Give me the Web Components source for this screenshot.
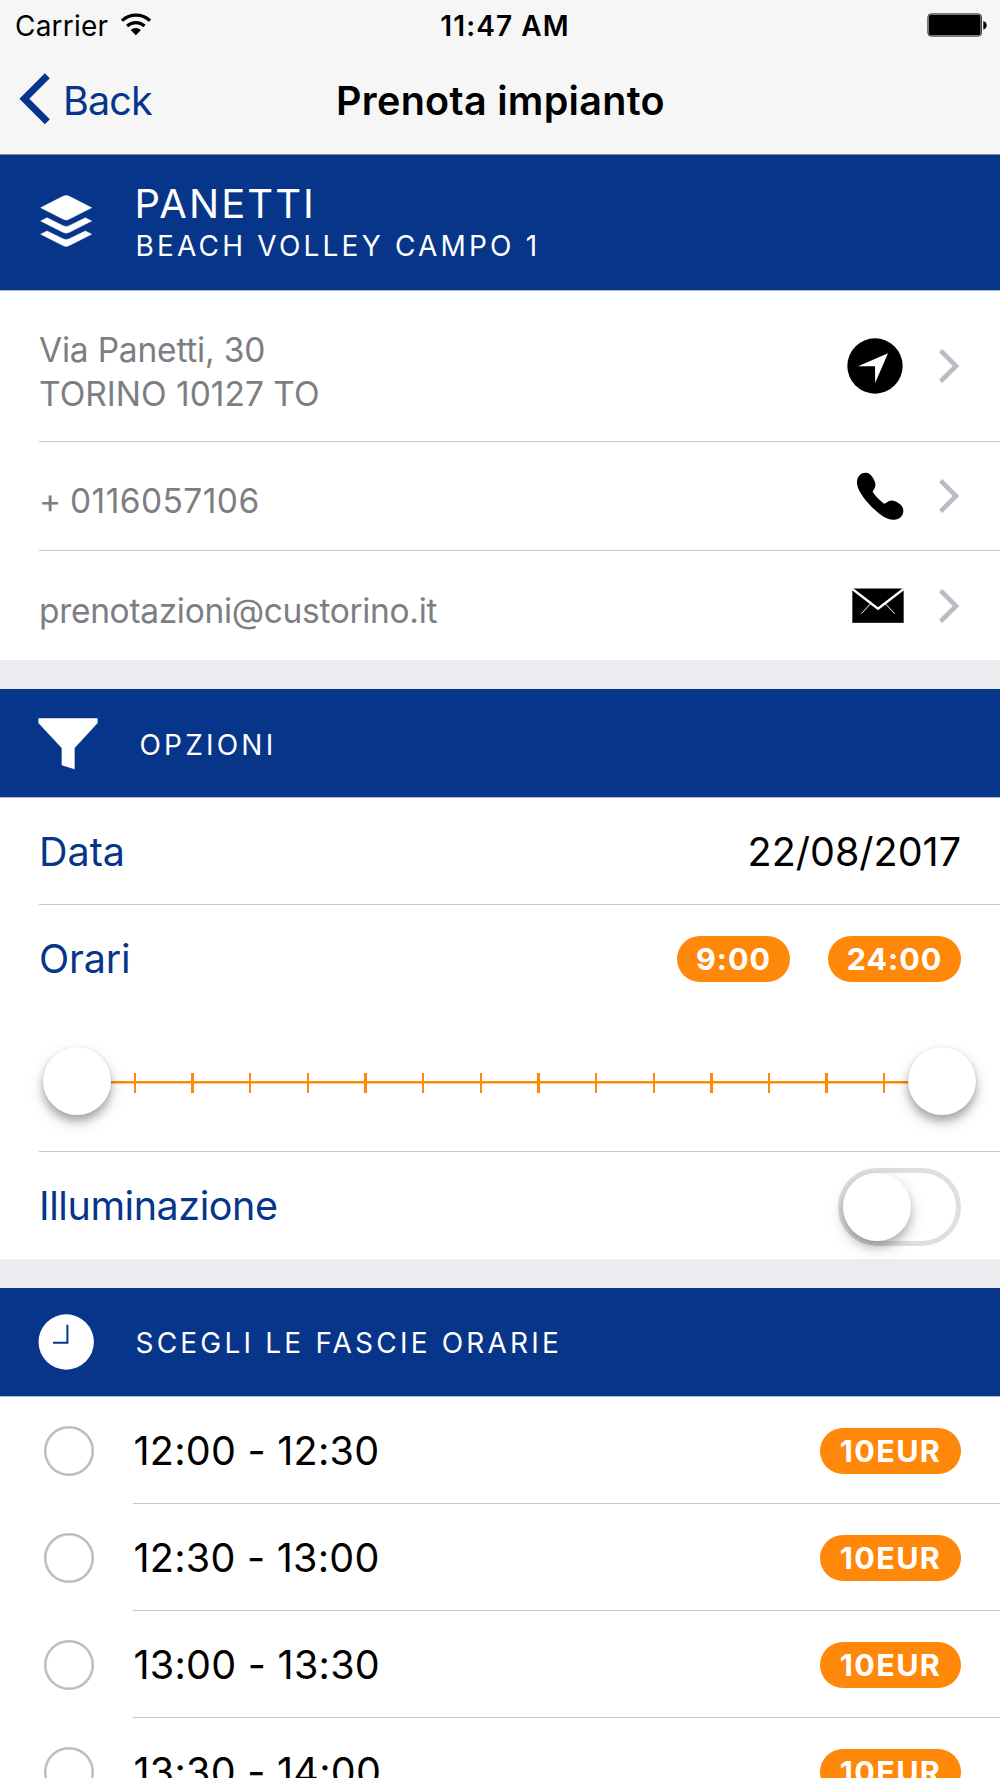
<!DOCTYPE html>
<html lang="it">
<head>
<meta charset="utf-8">
<title>Prenota impianto</title>
<style>
    body {
        margin: 0;
        background: #ebebf0;
        font-family: Inter, "Liberation Sans", sans-serif;
        --blue: #073589;
        --orange: #ff8709;
        --line: #c8c7cc;
    }
</style>
</head>
<body>
<booking-page></booking-page>

<script>
(function(){
    function define(name, html, setup) {
        const template = document.createElement('template');
        template.innerHTML = html;

        window.customElements.define(name, class extends HTMLElement {
            constructor() {
                super();
                const shadowRoot = this.attachShadow({mode: 'open'});
                shadowRoot.appendChild(template.content.cloneNode(true));
            }

            connectedCallback() {
                if (setup) setup(this, this.shadowRoot);
            }
        });
    }

    // name: [width, height, viewBox, markup]
    const icons = {
        wifi: [30, 23, '362 37 91 69', `
            <g fill="none" stroke="#000" stroke-width="9.5">
                <path d="M365 60 A62 62 0 0 1 450 60"/>
                <path d="M380.500 76 A39 39 0 0 1 433.500 76"/>
            </g>
            <path d="M391.500 88.500 A22 22 0 0 1 422.500 88.500 L407 104 Z"/>`],
        battery: [60, 24, '1280 38 180 72', `
            <rect x="1282.500" y="40.500" width="161" height="67" rx="10" fill="#999" stroke="#444" stroke-width="3"/>
            <rect x="1286" y="44" width="154" height="60" rx="5"/>
            <path d="M1449 62 Q1459 65 1459 75 Q1459 85 1449 88 Z"/>`],
        back: [32, 52, '58 219 96 156', `
            <path d="M143 227.500 L74 296.500 L143 365.500" fill="none" stroke="#073589" stroke-width="21"/>`],
        layers: [52, 52, '121 585 156 156', `
            <g fill="#fff" stroke="#fff" stroke-width="1.5">
                <path d="M123 623 L190 589 Q199.500 584 209 589 L276 623 L209 657 Q199.500 663 190 657 Z"/>
                <path d="M123 663 L142 653.500 L190 677 Q199.500 682 209 677 L257 653.500 L276 663 L209 697 Q199.500 702 190 697 Z"/>
                <path d="M123 702.500 L142 693 L190 716.500 Q199.500 721.500 209 716.500 L257 693 L276 702.500 L209 736.500 Q199.500 742 190 736.500 Z"/>
            </g>`],
        funnel: [60, 52, '115 143 180 156', `
            <path d="M116 144 H294 V158 L225 233 V297 L186 285 V233 L116 158 Z" fill="#fff"/>`],
        clock: [56, 56, '0 0 56 56', `
            <circle cx="28.2" cy="28" r="27.700" fill="#fff"/>
            <path d="M29.400 10.800 V28.800 H15" fill="none" stroke="#073589" stroke-width="2"/>`],
        locate: [56, 56, '442 114 168 168', `
            <circle cx="526" cy="198" r="83"/>
            <path d="M565 160 L475 198.500 L526 199 L526.500 249 Z" fill="#fff"/>`],
        phone: [48, 48, '467 517 144 144', `
            <path d="M470 547 C470 530 482 518 496 519 C506 519 512 525 518 535 C524 545 526 552 525 559
                C524 566 519 570 517 577 C526 590 538 602 551 612 C558 611 562 604 570 603 C578 602 588 606 597 612
                C605 618 609 624 609 634 C608 650 598 659 581 660 C565 661 548 651 534 640 C518 626 500 608 488 591
                C478 576 470 563 470 547Z"/>`],
        mail: [52, 35, '456 865 156 105', `
            <rect x="457" y="866.500" width="154" height="103"/>
            <g fill="none" stroke="#fff">
                <path d="M456 867 L534 927 L612 867" stroke-width="7"/>
                <path d="M512 912 L484 942 M556 912 L584 942" stroke-width="3"/>
            </g>`],
        chevron: [20, 34, '718 146 60 102', `
            <path d="M723 151 L769 197 L723 243" fill="none" stroke="#bcbbc3" stroke-width="14"/>`]
    };

    define('ui-icon', `
        <style>
            :host {
                display: block;
                flex: none;
            }
            svg {
                display: block;
            }
        </style>
    `, (host, root) => {
        const [width, height, box, markup] = icons[host.getAttribute('name')];
        root.innerHTML += `<svg width="${width}" height="${height}" viewBox="${box}">${markup}</svg>`;
    });

    define('status-bar', `
        <style>
            :host {
                display: grid;
                grid-template-columns: 1fr auto 1fr;
                align-items: center;
                height: 48px;
                padding: 0 13px 0 15px;
                font-size: 28px;
                line-height: 34px;
            }
            .carrier {
                display: flex;
                align-items: center;
                gap: 13px;
                letter-spacing: 0.2px;
            }
            .carrier span {
                padding-top: 3px;
            }
            .time {
                font-weight: 600;
                letter-spacing: 1.1px;
                padding: 3px 0 0 8px;
            }
            .battery {
                justify-self: end;
                padding-top: 1px;
            }
        </style>
        <div class="carrier"><span>Carrier</span><ui-icon name="wifi"></ui-icon></div>
        <div class="time">11:47 AM</div>
        <ui-icon class="battery" name="battery"></ui-icon>
    `);

    define('nav-bar', `
        <style>
            :host {
                display: grid;
                grid-template-columns: 1fr auto 1fr;
                align-items: center;
                height: 106px;
                box-sizing: border-box;
                padding: 0 19px 4px;
                font-size: 39.5px;
                line-height: 48px;
            }
            .back {
                display: flex;
                align-items: center;
                gap: 12px;
                color: var(--blue);
                letter-spacing: -0.9px;
            }
            .back span {
                padding-top: 4px;
            }
            .title {
                font-weight: 600;
                letter-spacing: 0.3px;
                padding: 4px 0 0 1px;
            }
        </style>
        <div class="back"><ui-icon name="back"></ui-icon><span>Back</span></div>
        <div class="title"><slot></slot></div>
    `);

    define('section-head', `
        <style>
            :host {
                display: flex;
                align-items: center;
                height: 108px;
                background: var(--blue);
                border-bottom: 1px solid #b4b7c9;
                color: white;
                font-size: 28px;
                line-height: 34px;
                letter-spacing: 3.2px;
            }
            .icon {
                flex: none;
                box-sizing: border-box;
                width: 135.5px;
                padding-left: 38px;
            }
            ::slotted(.big) {
                font-size: 40px;
                font-weight: 370;
                line-height: 48px;
                letter-spacing: 2.1px;
                margin: -2px 0 1px -1px;
            }
        </style>
        <div class="icon"><slot name="icon"></slot></div>
        <div><slot></slot></div>
    `);

    define('list-row', `
        <style>
            :host {
                display: block;
                background: white;
                padding-left: 39px;
            }
            .row {
                display: flex;
                align-items: center;
                box-sizing: border-box;
                height: 107px;
                padding: 2px 39px 0 0;
                border-bottom: 1px solid var(--line);
            }
            :host([last]) .row {
                padding-top: 3px;
                border-bottom-color: transparent;
            }
            :host([last]) .label {
                padding-bottom: 2px;
            }
            .label {
                flex: 1;
                color: var(--blue);
                font-size: 39.5px;
                line-height: 48px;
            }
        </style>
        <div class="row">
            <div class="label"><slot></slot></div>
            <slot name="end"></slot>
        </div>
    `);

    define('contact-row', `
        <style>
            :host {
                display: block;
                background: white;
                padding-left: 39px;
            }
            .row {
                display: flex;
                align-items: center;
                box-sizing: border-box;
                height: var(--height, 109px);
                padding-right: 41px;
                border-bottom: 1px solid var(--line);
            }
            :host([last]) .row {
                border-bottom: 0;
            }
            .text {
                flex: 1;
                padding-top: var(--shift, 12px);
                color: #7d7e83;
                font-size: 33.5px;
                line-height: 43.7px;
            }
            .chevron {
                margin-left: 35.5px;
            }
        </style>
        <div class="row">
            <div class="text"><slot></slot></div>
            <slot name="icon"></slot>
            <ui-icon class="chevron" name="chevron"></ui-icon>
        </div>
    `);

    define('ui-badge', `
        <style>
            :host {
                display: block;
                flex: none;
                box-sizing: border-box;
                width: 133px;
                height: 46px;
                border-radius: 23px;
                background: var(--orange);
                color: white;
                font-size: 30.5px;
                font-weight: 680;
                line-height: 46px;
                letter-spacing: 1px;
                text-align: center;
            }
        </style>
        <slot></slot>
    `);

    define('range-slider', `
        <style>
            :host {
                display: block;
            }
            .track {
                display: grid;
                grid-template-columns: repeat(16, 57.65px);
                align-items: center;
                height: 72px;
                margin-left: 9.5px;
                background: linear-gradient(var(--orange), var(--orange)) 40px 35px / 840px 2.5px no-repeat;
            }
            .track div {
                display: flex;
                justify-content: center;
            }
            i {
                flex: none;
                width: 2.4px;
                height: 20px;
                margin-top: 1px;
                background: var(--orange);
            }
            b {
                flex: none;
                width: 68px;
                height: 68px;
                margin-top: -2px;
                border-radius: 50%;
                background: white;
                box-shadow: 0 0 0 1px rgba(0,0,0,0.03), 0 6px 8px rgba(0,0,0,0.28), 0 7px 18px rgba(0,0,0,0.12);
            }
        </style>
        <div class="track"></div>
    `, (host, root) => {
        const track = root.querySelector('.track');
        for (let n = 0; n < 16; n++) {
            const cell = document.createElement('div');
            cell.appendChild(document.createElement(n % 15 ? 'i' : 'b'));
            track.appendChild(cell);
        }
    });

    define('hours-row', `
        <style>
            :host {
                display: block;
                background: white;
                padding-left: 39px;
            }
            .box {
                box-sizing: border-box;
                height: 247px;
                border-bottom: 1px solid var(--line);
            }
            .top {
                display: flex;
                align-items: center;
                gap: 38px;
                height: 107px;
                padding-right: 39px;
            }
            .label {
                flex: 1;
                color: var(--blue);
                font-size: 39.5px;
                line-height: 48px;
                letter-spacing: -0.2px;
            }
            range-slider {
                margin-top: 34px;
            }
        </style>
        <div class="box">
            <div class="top">
                <div class="label">Orari</div>
                <ui-badge style="width: 113px">9:00</ui-badge>
                <ui-badge>24:00</ui-badge>
            </div>
            <range-slider></range-slider>
        </div>
    `);

    define('toggle-switch', `
        <style>
            :host {
                display: block;
                flex: none;
                box-sizing: border-box;
                width: 123px;
                height: 78px;
                border: 5px solid #dfdfdf;
                border-radius: 39px;
            }
            div {
                width: 68px;
                height: 68px;
                border-radius: 50%;
                background: white;
                box-shadow: 0 6px 8px rgba(0,0,0,0.22), 0 6px 18px rgba(0,0,0,0.14);
            }
        </style>
        <div></div>
    `);

    define('slot-row', `
        <style>
            :host {
                display: flex;
                align-items: center;
                height: 107px;
                background: white;
            }
            /* border-width is floored to whole pixels, the inset ring adds the rest */
            .radio {
                flex: none;
                box-sizing: border-box;
                width: 50px;
                height: 50px;
                margin: 0 39px 0 44px;
                border: 2px solid #bbbac2;
                border-radius: 50%;
                box-shadow: inset 0 0 0 0.5px #bbbac2;
            }
            .row {
                flex: 1;
                display: flex;
                align-items: center;
                justify-content: space-between;
                box-sizing: border-box;
                height: 107px;
                padding: 1px 39px 0 0.5px;
                border-bottom: 1px solid var(--line);
                font-size: 39.5px;
                line-height: 48px;
                letter-spacing: 0.25px;
            }
            ui-badge {
                width: 141px;
                letter-spacing: 1.4px;
            }
        </style>
        <div class="radio"></div>
        <div class="row">
            <span><slot></slot></span>
            <ui-badge>10EUR</ui-badge>
        </div>
    `);

    define('booking-page', `
        <style>
            :host {
                display: flex;
                flex-direction: column;
                width: 1000px;
                height: 1778px;
                overflow: hidden;
            }
            :host > * {
                flex: none;
            }
            header {
                background: #f6f6f6;
                border-bottom: 1px solid #7d8ba5;
            }
            section + section {
                margin-top: 29px;
            }
            .facility {
                height: 135px;
            }
            .date {
                font-size: 39.5px;
                line-height: 48px;
            }
        </style>
        <header>
            <status-bar></status-bar>
            <nav-bar>Prenota impianto</nav-bar>
        </header>
        <section>
            <section-head class="facility">
                <ui-icon slot="icon" name="layers" style="margin: -3px 0 0 2px"></ui-icon>
                <div class="big">PANETTI</div>
                <div>BEACH VOLLEY CAMPO 1</div>
            </section-head>
            <contact-row style="--height: 151px; --shift: 14px">
                <div style="letter-spacing: -0.2px">Via Panetti, 30</div>
                <div>TORINO 10127 TO</div>
                <ui-icon slot="icon" name="locate" style="margin-right: 0.5px"></ui-icon>
            </contact-row>
            <contact-row>
                <span style="letter-spacing: 0.45px; word-spacing: -1.5px">+ 0116057106</span>
                <ui-icon slot="icon" name="phone"></ui-icon>
            </contact-row>
            <contact-row last>
                <span style="letter-spacing: -0.32px">prenotazioni@custorino.it</span>
                <ui-icon slot="icon" name="mail"></ui-icon>
            </contact-row>
        </section>
        <section>
            <section-head>
                <ui-icon slot="icon" name="funnel" style="margin-top: 1px"></ui-icon>
                <div style="margin: 3px 0 0 4px">OPZIONI</div>
            </section-head>
            <list-row>
                Data
                <span class="date" slot="end">22/08/2017</span>
            </list-row>
            <hours-row></hours-row>
            <list-row last>
                <span style="letter-spacing: -0.43px">Illuminazione</span>
                <toggle-switch slot="end"></toggle-switch>
            </list-row>
        </section>
        <section>
            <section-head>
                <ui-icon slot="icon" name="clock"></ui-icon>
                <div style="margin-top: 2px">SCEGLI LE FASCIE ORARIE</div>
            </section-head>
            <slot-row>12:00 - 12:30</slot-row>
            <slot-row>12:30 - 13:00</slot-row>
            <slot-row>13:00 - 13:30</slot-row>
            <slot-row>13:30 - 14:00</slot-row>
        </section>
    `);
})();
</script>
</body>
</html>
